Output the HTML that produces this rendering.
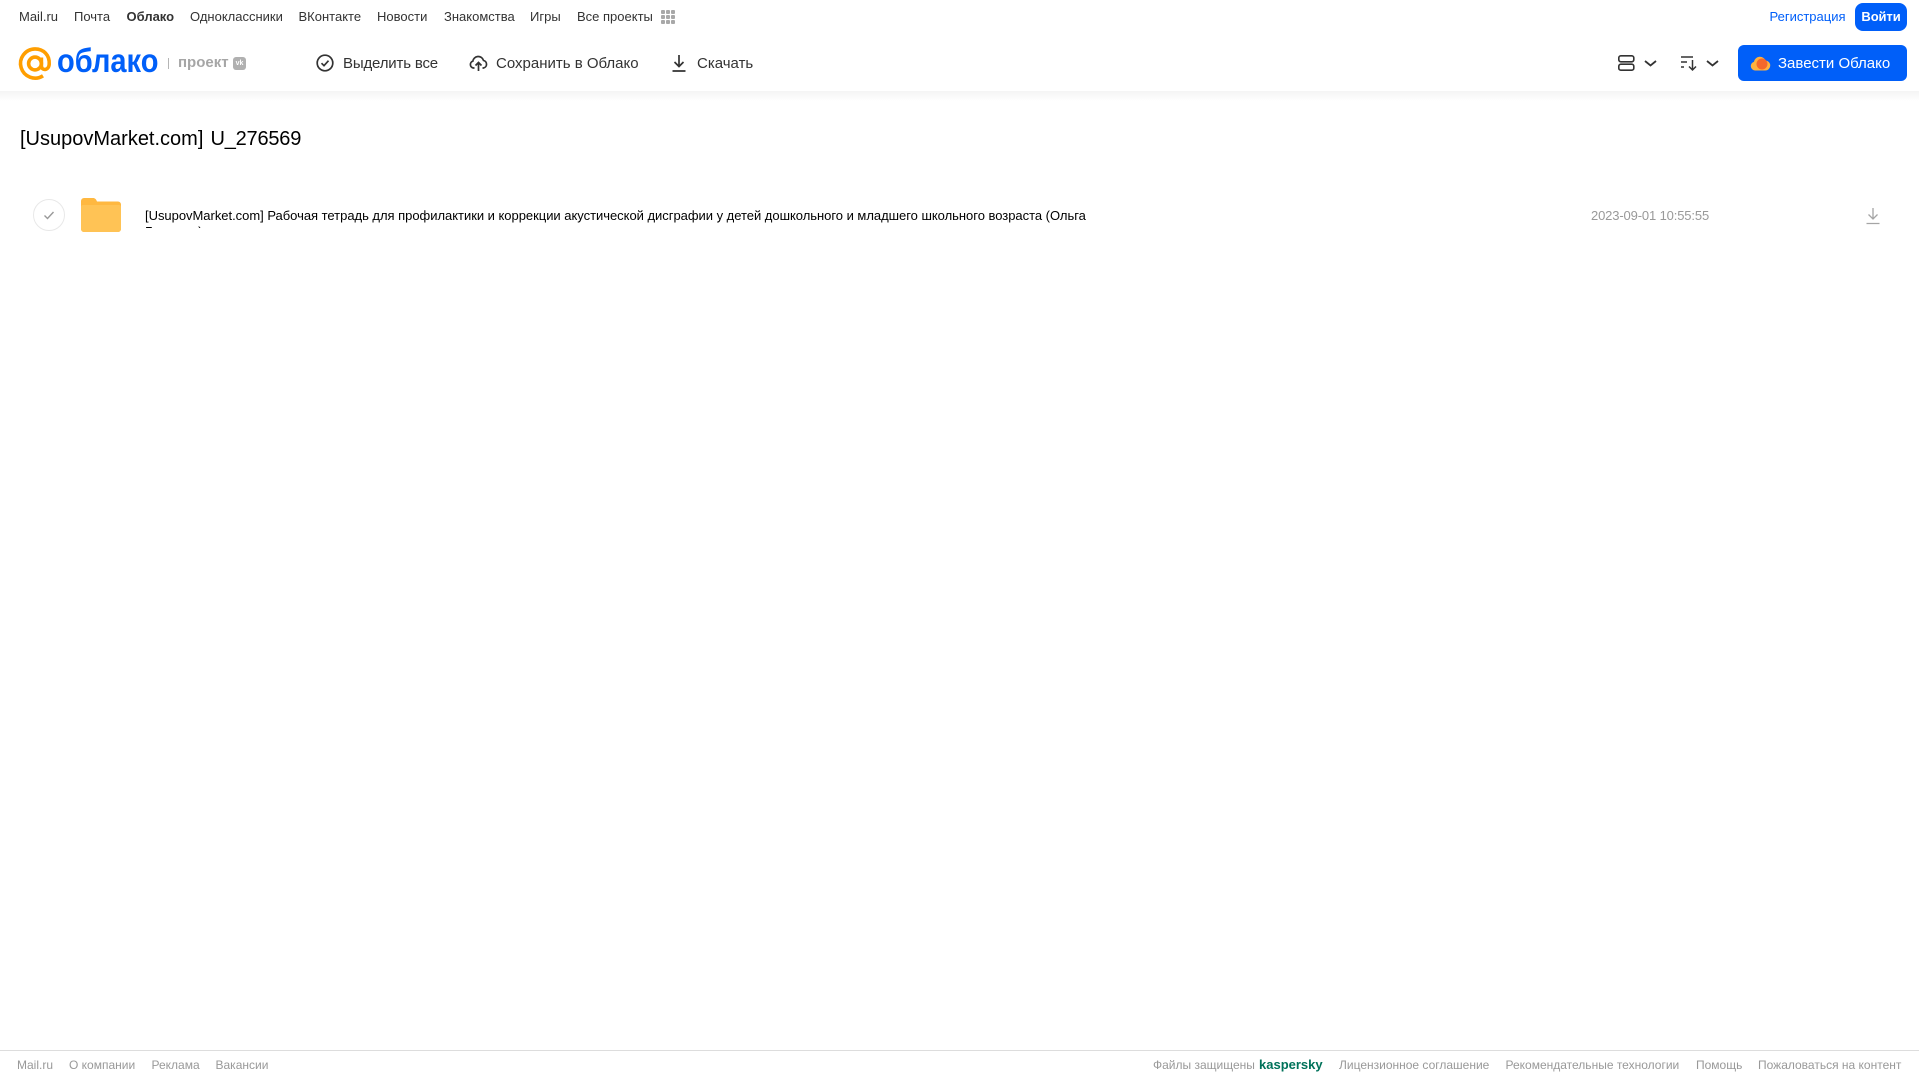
<!DOCTYPE html>
<html lang="ru"><head><meta charset="utf-8"><title>Облако</title>
<style>
html,body{margin:0;padding:0;background:#fff}
body{width:1919px;height:1079px;position:relative;overflow:hidden;font-family:"Liberation Sans",Arial,sans-serif}
.t{position:absolute;white-space:nowrap;line-height:16px}
.n{font-size:13px;color:#333;top:9px}
.b{font-size:15px;color:#333;top:55px;line-height:18px}
.f{font-size:12px;color:#999;top:1057px}
svg{position:absolute;overflow:visible}
</style></head><body>
<div style="position:absolute;left:0;top:91px;width:1919px;height:10px;background:linear-gradient(#f4f4f4,#fff)"></div>

<span class="t n" style="left:19px">Mail.ru</span>
<span class="t n" style="left:74px">Почта</span>
<span class="t n" style="left:126.500px;font-weight:bold">Облако</span>
<span class="t n" style="left:190px">Одноклассники</span>
<span class="t n" style="left:298.500px">ВКонтакте</span>
<span class="t n" style="left:377px">Новости</span>
<span class="t n" style="left:444px">Знакомства</span>
<span class="t n" style="left:530px">Игры</span>
<span class="t n" style="left:577px">Все проекты</span>
<svg style="left:661px;top:10px" width="14" height="14" fill="#a8a8a8"><rect width="4" height="4" rx="1"/><rect x="5" width="4" height="4" rx="1"/><rect x="10" width="4" height="4" rx="1"/><rect y="5" width="4" height="4" rx="1"/><rect x="5" y="5" width="4" height="4" rx="1"/><rect x="10" y="5" width="4" height="4" rx="1"/><rect y="10" width="4" height="4" rx="1"/><rect x="5" y="10" width="4" height="4" rx="1"/><rect x="10" y="10" width="4" height="4" rx="1"/></svg>
<span class="t n" style="left:1769.500px;color:#005ff9">Регистрация</span>
<div style="position:absolute;left:1855px;top:3px;width:52px;height:28px;border-radius:8px;background:#005ff9;color:#fff;font-size:13px;font-weight:bold;line-height:28px;text-align:center;letter-spacing:-.1px">Войти</div>

<svg style="left:19px;top:47px" width="33" height="33" viewBox="0 0 33 33" fill="none" stroke="#ff9e00" stroke-width="3.6"><circle cx="16" cy="16.500" r="6.400"/><path d="M22.400 10.500v8.300c0 5.200 7.400 5 7.800-1.600C30.800 8 24.500 1.900 16 1.900A14.600 14.600 0 1 0 24 28.800"/></svg>
<span class="t" style="left:57px;top:42px;font-size:33px;line-height:38px;color:#005ff9;font-weight:bold;transform:scaleX(.88);transform-origin:0 50%">облако</span>
<div style="position:absolute;left:168px;top:58px;width:1px;height:11px;background:#b5b5b5"></div>
<span class="t" style="left:178px;top:54px;font-size:15px;line-height:18px;font-weight:bold;color:#a6a6a6">проект</span>
<div style="position:absolute;left:233px;top:57px;width:13px;height:13px;border-radius:3px;background:#b0b0b0;color:#fff;font-size:7px;font-weight:bold;line-height:13px;text-align:center">vk</div>

<svg style="left:316px;top:54px" width="18" height="18" fill="none" stroke="#333" stroke-width="1.700"><circle cx="9" cy="9" r="7.800"/><path d="M5.500 9.200l2.500 2.500 4.500-5"/></svg>
<span class="t b" style="left:343px;letter-spacing:-.17px">Выделить все</span>
<svg style="left:469px;top:54px" width="19" height="18" fill="none" stroke="#333" stroke-width="1.700"><path d="M5.500 14H4.500A3.500 3.500 0 0 1 3.800 7.200 5.500 5.500 0 0 1 14.500 6.400 3.900 3.900 0 0 1 14.500 14h-1"/><path d="M9.500 17V9M6.500 11.500l3-3 3 3"/></svg>
<span class="t b" style="left:496px">Сохранить в Облако</span>
<svg style="left:669.500px;top:54px" width="18" height="18" fill="none" stroke="#333" stroke-width="1.700"><path d="M9 1v11M4.500 8L9 12.500 13.500 8M2.500 17h13"/></svg>
<span class="t b" style="left:697px">Скачать</span>

<svg style="left:1618px;top:55px" width="17" height="16" fill="none" stroke="#333" stroke-width="1.600"><rect x=".8" y=".8" width="15" height="6" rx="2"/><rect x=".8" y="9.200" width="15" height="6" rx="2"/></svg>
<svg style="left:1643.500px;top:60px" width="13" height="7" fill="none" stroke="#333" stroke-width="1.800"><path d="M1 1l5.500 4.500L12 1"/></svg>
<svg style="left:1681px;top:55px" width="17" height="16" fill="none" stroke="#333" stroke-width="1.500"><path d="M0 2h12M0 7h6M0 12h3M11.500 5v10M8 11.500l3.500 3.500 3.500-3.500"/></svg>
<svg style="left:1705.500px;top:60px" width="13" height="7" fill="none" stroke="#333" stroke-width="1.800"><path d="M1 1l5.500 4.500L12 1"/></svg>
<div style="position:absolute;left:1738px;top:45px;width:169px;height:36px;border-radius:6px;background:#005ff9"></div>
<svg style="left:1750px;top:54px" width="20" height="17"><path d="M5 16.500A4.500 4.500 0 0 1 4 7.700 6 6 0 0 1 15.500 6.500 5 5 0 0 1 15 16.500z" fill="#ffb23f"/><circle cx="12" cy="10" r="5.500" fill="#f4682c"/></svg>
<span class="t" style="left:1778px;top:55px;font-size:15px;line-height:18px;color:#fff">Завести Облако</span>

<div class="t" style="left:20px;top:126px;font-size:20px;line-height:26px;color:#000;word-spacing:1.500px">[UsupovMarket.com] <span style="letter-spacing:-.2px">U_276569</span></div>

<svg style="left:33px;top:199px" width="32" height="32" fill="none"><circle cx="16" cy="16" r="15.500" stroke="#e8e8e8"/><path d="M11.500 16.500l3 3 6-6.500" stroke="#999" stroke-width="1.400"/></svg>
<svg style="left:81px;top:198px" width="40" height="34"><path d="M0 3a3 3 0 0 1 3-3h9c2 0 3 1 4 3.500h21a3 3 0 0 1 3 3V31a3 3 0 0 1-3 3H3a3 3 0 0 1-3-3z" fill="#ffb840"/><path d="M0 9a2 2 0 0 1 2-2h36a2 2 0 0 1 2 2v22a3 3 0 0 1-3 3H3a3 3 0 0 1-3-3z" fill="#ffc355"/></svg>
<div style="position:absolute;left:145px;top:208px;width:950px;height:20px;overflow:hidden;font-size:13px;line-height:16px;color:#000;letter-spacing:-.026px">[UsupovMarket.com] Рабочая тетрадь для профилактики и коррекции акустической дисграфии у детей дошкольного и младшего школьного возраста (Ольга Гусакова)</div>
<span class="t" style="left:1591px;top:208px;font-size:13px;color:#999;letter-spacing:-.14px">2023-09-01 10:55:55</span>
<svg style="left:1866px;top:207px" width="14" height="18" fill="none" stroke="#a5a5a5" stroke-width="1.300"><path d="M7 1v11M2.500 7.500L7 12l4.500-4.500M.5 16.500h13" /></svg>

<div style="position:absolute;left:0;top:1050px;width:1919px;height:1px;background:#ddd"></div>
<span class="t f" style="left:17px">Mail.ru</span>
<span class="t f" style="left:69px">О компании</span>
<span class="t f" style="left:151.500px">Реклама</span>
<span class="t f" style="left:215.500px">Вакансии</span>
<span class="t f" style="left:1153px">Файлы защищены</span>
<span class="t f" style="left:1259px;color:#00725a;font-weight:bold;font-size:13px">kaspersky</span>
<span class="t f" style="left:1339px">Лицензионное соглашение</span>
<span class="t f" style="left:1505.500px">Рекомендательные технологии</span>
<span class="t f" style="left:1696px">Помощь</span>
<span class="t f" style="left:1758px">Пожаловаться на контент</span>
</body></html>
